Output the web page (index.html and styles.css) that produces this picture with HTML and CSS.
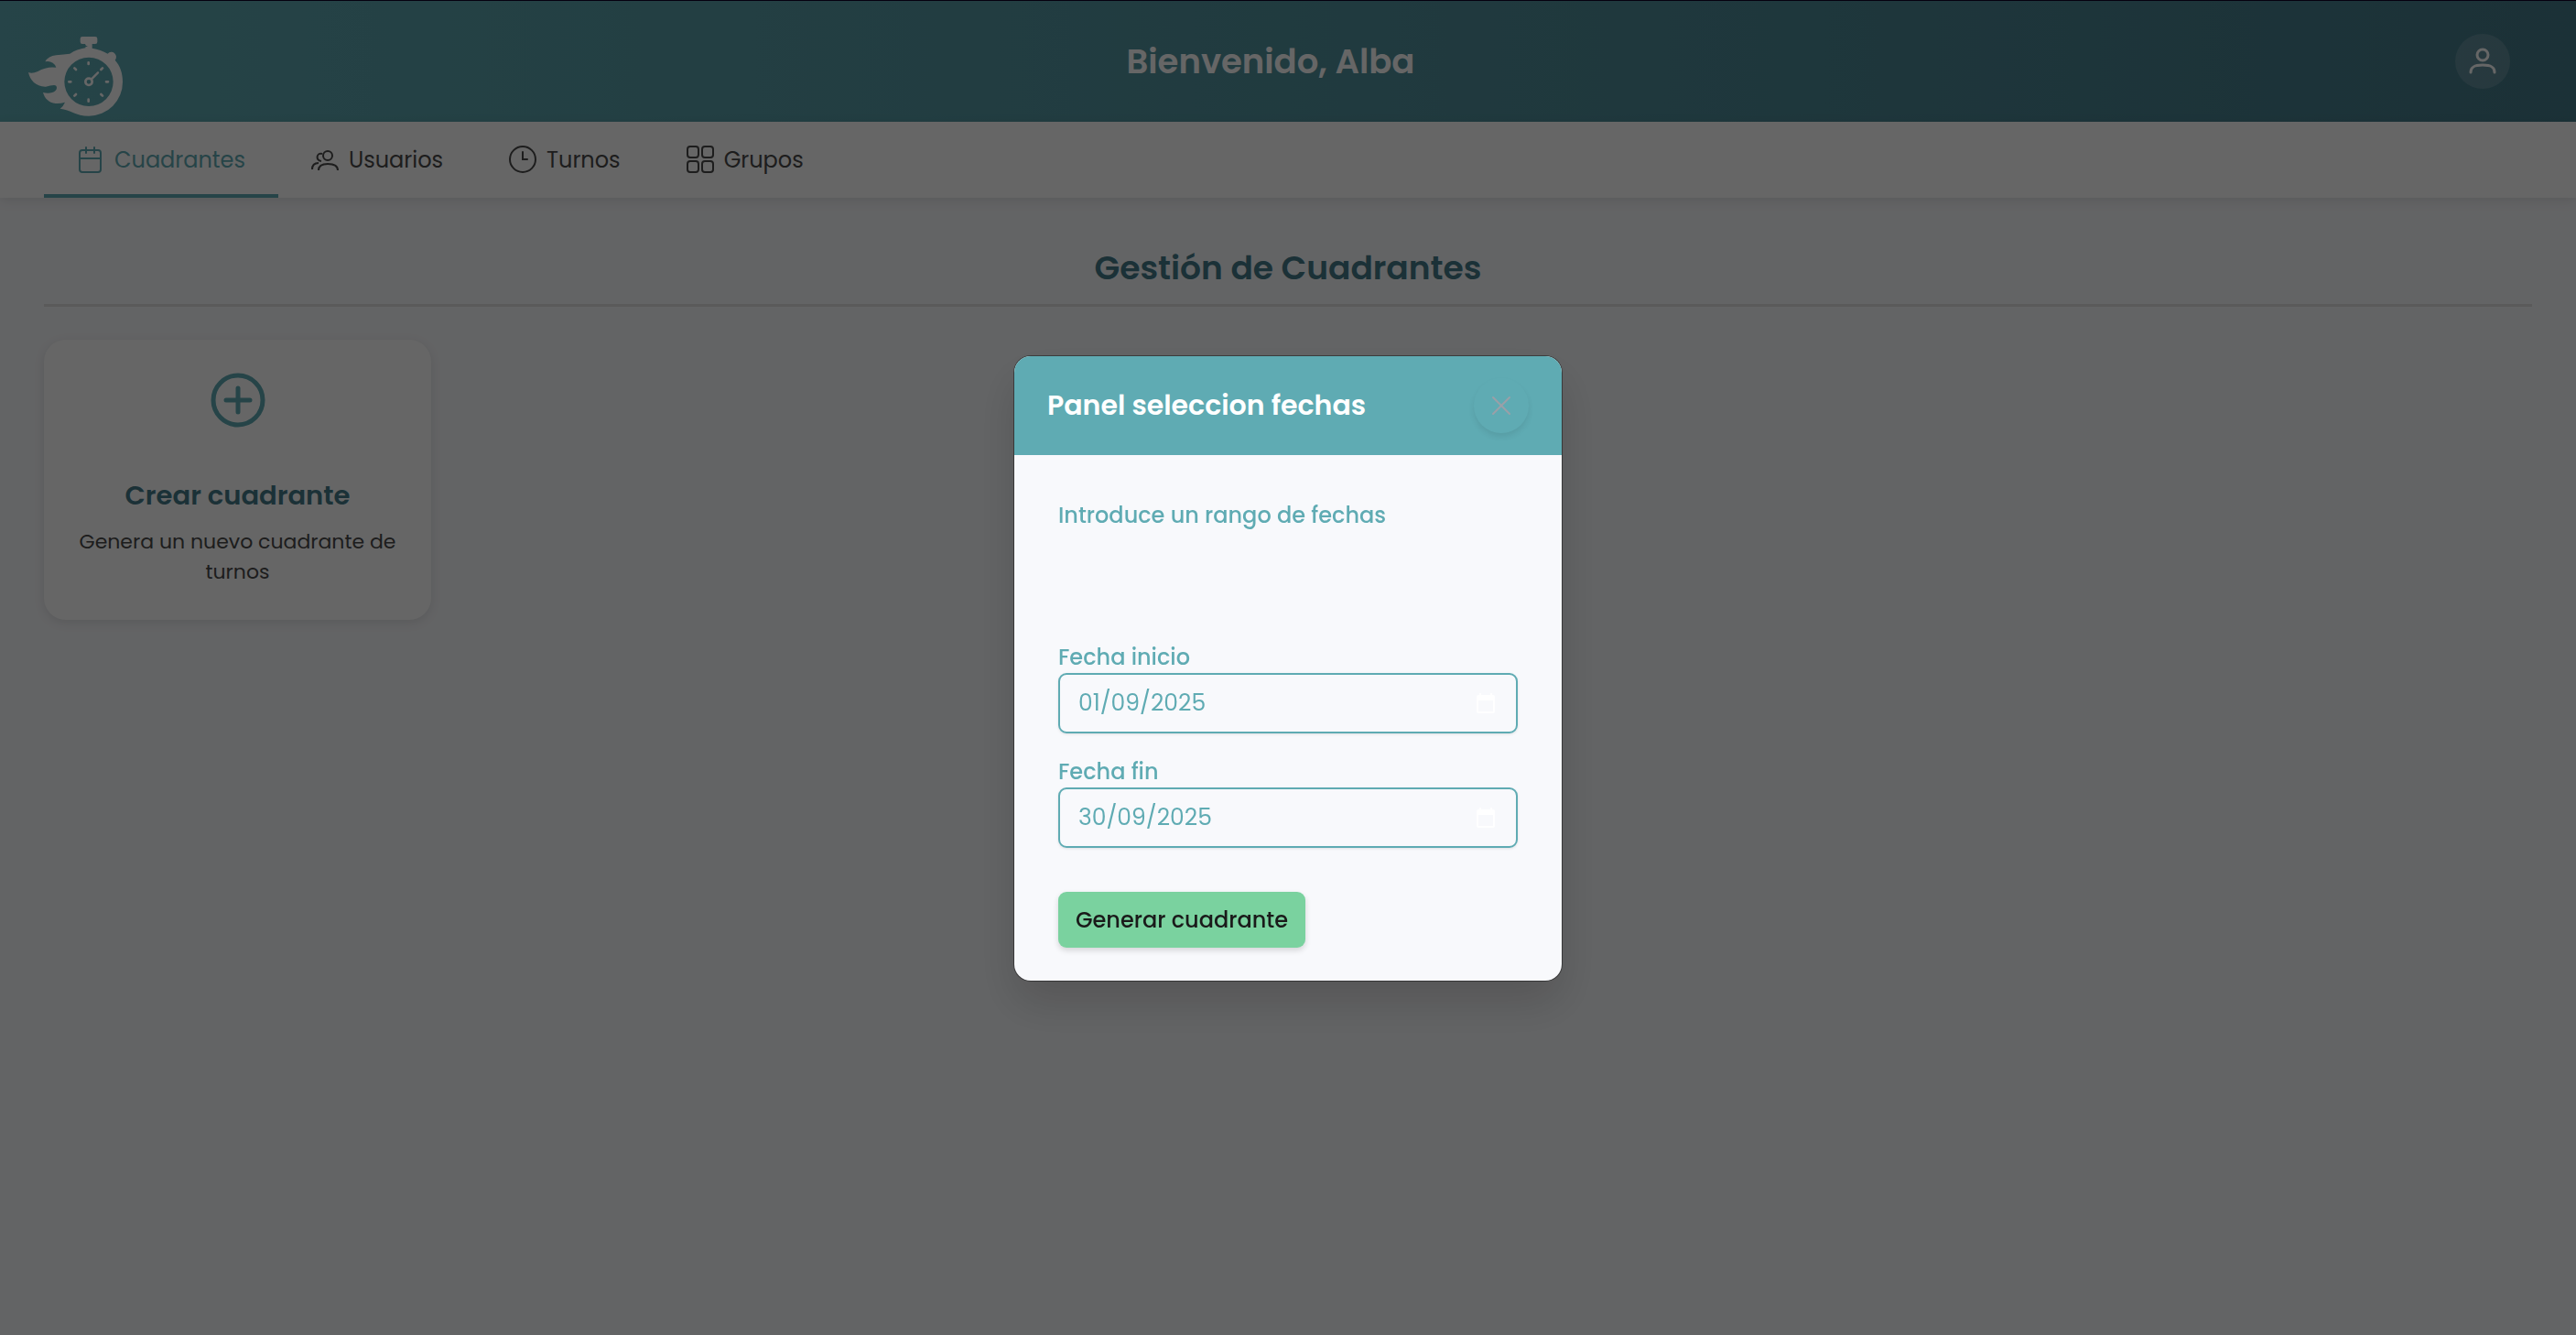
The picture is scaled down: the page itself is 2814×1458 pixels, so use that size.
FILE: index.html
```html
<!DOCTYPE html>
<html lang="es">
<head>
  <meta charset="utf-8">
  <meta name="viewport" content="width=device-width, initial-scale=1">
  <title>Gestión de Cuadrantes</title>
  <link rel="stylesheet" href="styles.css">
</head>
<body>
  <header class="topbar">
    <a class="logo" href="#" aria-label="Inicio">
      <svg viewBox="93 120 309 261" fill="currentColor" aria-hidden="true">
        <path d="M270 120h42q7 0 7 7v10q0 7-7 7h-10v14q28 4 51 18a15 15 0 1 1 24 21C394 216 402 240 402 268a111 111 0 0 1-111 112C248 380 232 359 197 356Q207 349 213 335Q198 340 182 339C160 337 146 322 141 303Q158 307 171 303Q185 299 186 288Q186 279 177 279Q166 279 150 284C118 285 98 262 93 237Q105 243 124 234Q152 217 184 221Q183 213 173 206Q162 199 148 202Q158 184 184 181Q210 178 229 176Q252 161 280 157V154L288 152Q279 150 279 144H270q-7 0-7-7v-10q0-7 7-7zM291 188a80 80 0 1 0 0 160a80 80 0 1 0 0-160z" fill-rule="evenodd"/>
        <g fill="none" stroke="currentColor" stroke-width="8" stroke-linecap="round">
          <path d="M290 205v5M290 326v6M226 268h6M348 268h6M244 223l5 5M331 228l5-5M244 314l5-5M331 309l5 5"/>
          <circle cx="291" cy="268" r="11"/>
          <path d="M300 259l21-21" stroke-width="7"/>
        </g>
      </svg>
    </a>
    <h1 class="welcome">Bienvenido, Alba</h1>
    <div class="account">
      <button class="avatar" type="button" aria-label="Cuenta">
        <svg viewBox="0 0 30 30" fill="none" stroke="currentColor" stroke-width="3" stroke-linecap="round" aria-hidden="true">
          <circle cx="15" cy="8" r="6"/>
          <path d="M2 27c0-6 4-8 13-8s13 2 13 8"/>
        </svg>
      </button>
    </div>
  </header>

  <nav class="tabs" aria-label="Principal">
    <a class="tab tab-active" href="#cuadrantes" aria-current="page">
      <svg class="tab-icon" viewBox="0 0 30 30" fill="none" stroke="currentColor" stroke-width="2" stroke-linecap="round" aria-hidden="true">
        <rect x="3" y="4" width="23" height="24" rx="3"/>
        <path d="M3 13h23M10 1v6M19 1v6"/>
      </svg>
      <span>Cuadrantes</span>
    </a>
    <a class="tab" href="#usuarios">
      <svg class="tab-icon" viewBox="0 0 30 30" fill="none" stroke="currentColor" stroke-width="2" aria-hidden="true">
        <circle cx="18" cy="10" r="5"/>
        <path d="M8 26c0-5 3-7 10-7s11 2 11 7M12 8c-6-2-8 7-1 8M1 25c0-5 2-7 7-7"/>
      </svg>
      <span>Usuarios</span>
    </a>
    <a class="tab" href="#turnos">
      <svg class="tab-icon" viewBox="0 0 30 30" fill="none" stroke="currentColor" stroke-width="2" stroke-linecap="round" aria-hidden="true">
        <circle cx="15" cy="14" r="14"/>
        <path d="M15 6v8h5"/>
      </svg>
      <span>Turnos</span>
    </a>
    <a class="tab" href="#grupos">
      <svg class="tab-icon" viewBox="0 0 30 30" fill="none" stroke="currentColor" stroke-width="2" aria-hidden="true">
        <rect x="1" y="0" width="12" height="12" rx="3"/>
        <rect x="17" y="0" width="12" height="12" rx="3"/>
        <rect x="1" y="16" width="12" height="12" rx="3"/>
        <rect x="17" y="16" width="12" height="12" rx="3"/>
      </svg>
      <span>Grupos</span>
    </a>
  </nav>

  <main class="content">
    <h2 class="page-title">Gestión de Cuadrantes</h2>
    <div class="cards">
      <button class="card" type="button">
        <svg class="card-icon" viewBox="0 0 60 60" fill="none" stroke="currentColor" stroke-width="5" stroke-linecap="round" aria-hidden="true">
          <circle cx="30" cy="30" r="27"/>
          <path d="M30 17v26M17 30h26"/>
        </svg>
        <span class="card-title">Crear cuadrante</span>
        <span class="card-text">Genera un nuevo cuadrante de turnos</span>
      </button>
    </div>
  </main>

  <div class="overlay">
    <section class="modal" role="dialog" aria-modal="true" aria-labelledby="modal-title">
      <div class="modal-header">
        <h2 class="modal-title" id="modal-title">Panel seleccion fechas</h2>
        <button class="close" type="button" aria-label="Cerrar">
          <svg viewBox="0 0 20 20" fill="none" stroke="currentColor" stroke-width="2" stroke-linecap="round" aria-hidden="true">
            <path d="M1 1l18 18M19 1L1 19"/>
          </svg>
        </button>
      </div>
      <form class="modal-body">
        <p class="intro">Introduce un rango de fechas</p>
        <div class="field">
          <label for="fecha-inicio">Fecha inicio</label>
          <div class="date-box">
            <input id="fecha-inicio" type="text" inputmode="numeric" value="01/09/2025">
            <svg class="date-icon" viewBox="0 0 20 22" fill="currentColor" aria-hidden="true">
              <path d="M3 0h2v2h10V0h2v2h1q2 0 2 2v16q0 2-2 2H2q-2 0-2-2V4q0-2 2-2h1zM2 8v12h16V8z" fill-rule="evenodd"/>
            </svg>
          </div>
        </div>
        <div class="field">
          <label for="fecha-fin">Fecha fin</label>
          <div class="date-box">
            <input id="fecha-fin" type="text" inputmode="numeric" value="30/09/2025">
            <svg class="date-icon" viewBox="0 0 20 22" fill="currentColor" aria-hidden="true">
              <path d="M3 0h2v2h10V0h2v2h1q2 0 2 2v16q0 2-2 2H2q-2 0-2-2V4q0-2 2-2h1zM2 8v12h16V8z" fill-rule="evenodd"/>
            </svg>
          </div>
        </div>
        <button class="submit" type="submit">Generar cuadrante</button>
      </form>
    </section>
  </div>
</body>
</html>
```

FILE: styles.css
```css
:root {
  --teal: #5fabb3;
  --deep: #457b8a;
  --ink: #4a4a4a;
  --surface: #f8f9fc;
}

* {
  box-sizing: border-box;
}

body {
  margin: 0;
  min-height: 100vh;
  background: var(--surface);
  color: var(--ink);
  font-family: Poppins, Inter, sans-serif;
  font-size: 24px;
}

h1,
h2,
p {
  margin: 0;
}

button,
input {
  font: inherit;
  color: inherit;
}

svg {
  display: block;
  overflow: visible;
}

.topbar {
  display: flex;
  align-items: center;
  height: 133px;
  padding: 0 72px 0 31px;
  border-top: 1px solid #0d0026;
  background: linear-gradient(90deg, var(--teal), var(--deep));
  color: #fff;
}

.logo {
  width: 103px;
  padding-top: 32px;
  color: inherit;
}

.welcome {
  flex: 1;
  font-size: 37px;
  font-weight: 600;
  line-height: 54px;
  text-align: center;
}

.account {
  display: flex;
  justify-content: flex-end;
  width: 100px;
}

.avatar {
  display: grid;
  place-items: center;
  width: 60px;
  height: 60px;
  padding: 0;
  border: 0;
  border-radius: 50%;
  background: rgba(255, 255, 255, 0.15);
}

.avatar svg {
  width: 30px;
}

.tabs {
  display: flex;
  padding: 0 48px;
  background: #fff;
  box-shadow: 0 3px 12px rgba(0, 0, 0, 0.1);
}

.tab {
  display: flex;
  align-items: center;
  gap: 11px;
  height: 83px;
  padding: 0 36px;
  border-top: 4px solid transparent;
  border-bottom: 4px solid transparent;
  color: inherit;
  text-decoration: none;
}

.tab-active {
  border-bottom-color: var(--teal);
  color: var(--teal);
}

.tab-icon {
  width: 30px;
  height: 30px;
}

.content {
  padding: 48px;
}

.page-title {
  padding-bottom: 10px;
  border-bottom: 3px solid #e0e0e0;
  color: var(--deep);
  font-size: 36px;
  font-weight: 600;
  line-height: 58px;
  text-align: center;
}

.cards {
  display: grid;
  grid-template-columns: repeat(auto-fill, 423px);
  gap: 36px;
  margin-top: 36px;
}

.card {
  display: flex;
  flex-direction: column;
  align-items: center;
  padding: 36px;
  border: 0;
  border-radius: 24px;
  background: #fff;
  box-shadow: 0 3px 12px rgba(0, 0, 0, 0.1);
}

.card-icon {
  width: 60px;
  height: 60px;
  color: var(--teal);
}

.card-title {
  margin: 54px 0 14px;
  color: var(--deep);
  font-size: 29px;
  font-weight: 600;
  line-height: 40px;
}

.card-text {
  font-size: 22px;
  line-height: 33px;
}

.overlay {
  position: fixed;
  inset: 0;
  display: grid;
  place-items: center;
  padding-top: 2px;
  background: rgba(0, 0, 0, 0.6);
}

.modal {
  width: 598px;
  overflow: hidden;
  border-radius: 18px;
  background: var(--surface);
  box-shadow: 0 0 0 1px rgba(0, 0, 0, 0.4), 0 24px 48px rgba(0, 0, 0, 0.15);
}

.modal-header {
  display: flex;
  align-items: center;
  justify-content: space-between;
  padding: 24px 36px;
  background: var(--teal);
}

.modal-title {
  color: #fff;
  font-size: 30px;
  font-weight: 600;
  line-height: 40px;
}

.close {
  display: grid;
  place-items: center;
  width: 60px;
  height: 60px;
  padding: 0;
  border: 0;
  border-radius: 50%;
  background: transparent;
  box-shadow: 0 4px 6px rgba(0, 0, 0, 0.08);
  color: #9aa0a8;
}

.close svg {
  width: 20px;
}

.modal-body {
  padding: 48px 48px 36px;
  color: var(--teal);
}

.intro {
  margin-bottom: 119px;
  font-weight: 500;
  line-height: 36px;
}

.field + .field {
  margin-top: 24px;
}

.field label {
  display: block;
  font-weight: 500;
  line-height: 35px;
}

.date-box {
  display: flex;
  align-items: center;
  height: 66px;
  padding: 0 23px 0 20px;
  border: 2px solid var(--teal);
  border-radius: 9px;
  box-shadow: 0 1px 3px rgba(0, 0, 0, 0.1);
}

.date-box input {
  flex: 1;
  min-width: 0;
  padding: 0;
  border: 0;
  outline: 0;
  background: none;
  font-size: 25px;
}

.date-icon {
  width: 20px;
  height: 22px;
  color: #fff;
}

.submit {
  height: 61px;
  margin-top: 48px;
  padding: 0 19px;
  border: 0;
  border-radius: 9px;
  background: #7ad29f;
  box-shadow: 0 3px 6px rgba(0, 0, 0, 0.15);
  color: #1a1a1a;
  font-weight: 500;
}
```
